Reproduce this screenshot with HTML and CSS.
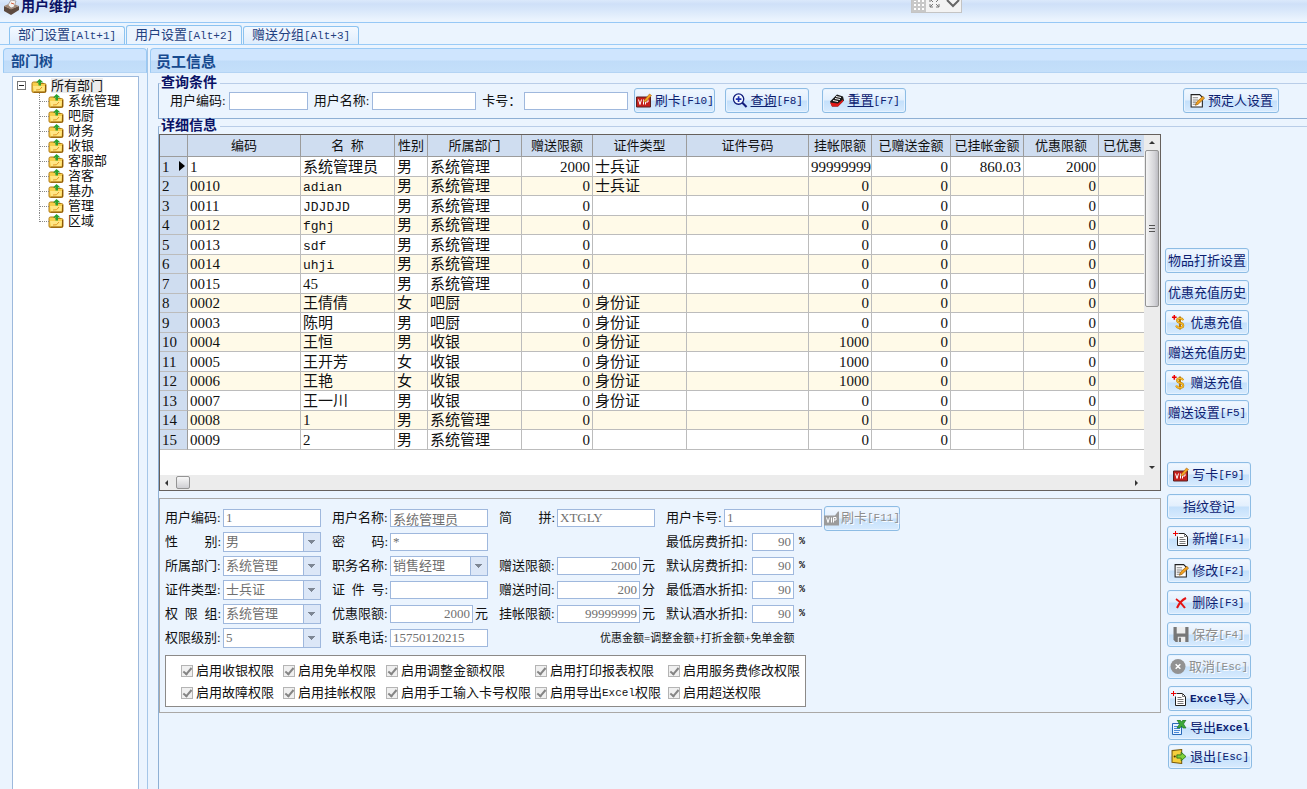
FILE: index.html
```html
<!DOCTYPE html>
<html lang="zh-CN">
<head>
<meta charset="utf-8">
<title>用户维护</title>
<link rel="stylesheet" href="styles.css">
</head>
<body>
<svg class="defs" aria-hidden="true">
  <symbol id="i-folder" viewBox="0 0 16 14"><path d="M1 4.500q0-1.500 1.500-1.500h3.500l1.500 1.500h6q1.500 0 1.500 1.500v6q0 1.500-1.500 1.500h-11q-1.500 0-1.500-1.500z" fill="#f8cf4c" stroke="#b07a14"/><path d="M2 7h12l-1 5.500h-10z" fill="#ffe684"/><path d="M5 11q4 1 6-3" fill="none" stroke="#e39a24"/><path d="M8.500 0l4 3.500h-2.500v3h-2.500v-3h-2.500z" fill="#2ba12d"/><path d="M14.500 6v7h-12" fill="none" stroke="#8b5a0a"/></symbol>
  <symbol id="i-vip" viewBox="0 0 16 14"><path d="M.5 3.500h14v10h-14z" fill="#c5201c" stroke="#5a2020"/><path d="M2.500 6l1.500 5 1.500-5M7.500 6v5M9.500 11v-5h2.500v2.500h-2.500" fill="none" stroke="#fff"/><path d="M8 7l5.500-6.500 2 1.500-5.500 6-2 .5z" fill="#f5a623" stroke="#a8620c" stroke-width=".6"/></symbol>
  <symbol id="i-vip-off" viewBox="0 0 16 14"><path d="M0 4h11l3-4h1v14h-15z" fill="#9b9b9b"/><path d="M2.500 6l1.500 5 1.500-5M7.500 6v5M9.500 11v-5h2.500v2.500h-2.500" fill="none" stroke="#fff"/></symbol>
  <symbol id="i-zoom" viewBox="0 0 16 16"><circle cx="6.500" cy="6.500" r="5.500" fill="#f4f9ff" stroke="#101c7c" stroke-width="1.400"/><path d="M6.500 3.500v6M3.500 6.500h6" stroke="#1c2fb0" stroke-width="1.800"/><path d="M10.500 10.500l4.500 4.500" stroke="#101c7c" stroke-width="2.200"/></symbol>
  <symbol id="i-reset" viewBox="0 0 16 14"><path d="M1 8l7-7 6 2 1 4-6 6h-6z" fill="#1b1b1b"/><path d="M7 3l5 1M6 5l5 1M4 7l5 1" stroke="#fff"/><path d="M1 9l8 1 5-4v2l-5 5h-6z" fill="#e11b1b"/></symbol>
  <symbol id="i-edit" viewBox="0 0 14 14"><path d="M1.500 1.500h8l2.500 2.500v9h-10.500z" fill="#fff" stroke="#222"/><path d="M3 4.500h5M3 6.500h5M3 8.500h3M3 10.500h3" stroke="#888"/><path d="M5.500 11.500l1-3 6-5.500 1.500 2-6 5.500z" fill="#f0a020" stroke="#8a560a" stroke-width=".6"/></symbol>
  <symbol id="i-new" viewBox="0 0 16 15"><path d="M5.500 2.500h6l3 3v9h-10v-9" fill="#fff" stroke="#222"/><path d="M11.500 2.500v3h3M6.500 6.500h4M6.500 8.500h6M6.500 10.500h6M6.500 12.500h6" fill="none" stroke="#777"/><path d="M2.500 0v5M0 2.500h5" stroke="#e00"/></symbol>
  <symbol id="i-money" viewBox="0 0 15 16"><path d="M12 5.500q-1-2-3.500-2-3 0-3 2t3 2.800q3.500.7 3.500 3t-3.500 2.500q-3 0-4-2.500M8.500 1.500v14" fill="none" stroke="#b87808" stroke-width="2.200"/><path d="M12 5.500q-1-2-3.500-2-3 0-3 2t3 2.800q3.500.7 3.500 3t-3.500 2.500q-3 0-4-2.500" fill="none" stroke="#f8bd28" stroke-width="1.300"/><path d="M2.500 0v5M0 2.500h5" stroke="#e00" stroke-width="1.600"/></symbol>
  <symbol id="i-del" viewBox="0 0 12 12"><path d="M1 2q5 3 9 9M11 1q-6 3-9 10" fill="none" stroke="#e41414" stroke-width="2"/></symbol>
  <symbol id="i-save" viewBox="0 0 14 14"><path d="M0 0h14v14h-12l-2-2z" fill="#777"/><path d="M3 0h8v6h-8zM4 9h7v5h-7z" fill="#ededed"/><path d="M5 10h2v4h-2z" fill="#777"/></symbol>
  <symbol id="i-cancel" viewBox="0 0 16 16"><circle cx="8" cy="8" r="8" fill="#929292"/><path d="M5.500 5.500l5 5M10.500 5.500l-5 5" stroke="#fff" stroke-width="1.600"/></symbol>
  <symbol id="i-export" viewBox="0 0 14 15"><path d="M.5 3.500h9v11h-9z" fill="#e8f3ff" stroke="#2869b8"/><path d="M2 6.500h4M2 8.500h6M2 10.500h6M2 12.500h5" stroke="#4a8ad8"/><path d="M5 0h3l1.500 2 1.500-2h3l-2.500 4 2.500 4h-3l-1.500-2-1.500 2h-3l2.500-4z" fill="#3ca83a" stroke="#146a18" stroke-width=".6"/></symbol>
  <symbol id="i-exit" viewBox="0 0 14 14"><path d="M.5 1.500l9-1v13l-9-1z" fill="#f5cf3c" stroke="#7a5c10"/><circle cx="3" cy="7" r="1" fill="#4a3606"/><path d="M5 5.500h4v-2.500l4.500 4-4.500 4v-2.500h-4z" fill="#7fd23a" stroke="#24701a" stroke-width=".8"/></symbol>
</svg>

<header class="titlebar">
  <svg class="app-icon" viewBox="0 0 15 15"><path d="M0 6l7 3 8-3v4l-8 5-7-4z" fill="#5d4a3f"/><path d="M0 6l7-3 8 3-8 3.500z" fill="#a48a78"/><path d="M4 5l3-5 5 1-2 6-3 1z" fill="#f4f1ee" stroke="#8d8078" stroke-width=".6"/><path d="M7 3l3 1" stroke="#d05a3a"/></svg>
  <h1>用户维护</h1>
  <div class="viewer">
    <svg viewBox="0 0 50 13"><path d="M0 0h14v12h-14z" fill="#c8c8c8"/><path d="M2 1h2v1h-2zM6 0h2v2h-2zM10 0h2v2h-2zM2 4h2v2h-2zM6 4h2v2h-2zM10 4h2v2h-2zM2 8h2v2h-2zM6 8h2v2h-2zM10 8h2v2h-2z" fill="#fff"/><path d="M18 2v-2M18 4v3h3M18 7l3-3M27 4v3h-3M27 7l-3-3M19 0l2 2M26 0l-2 2" fill="none" stroke="#777"/><path d="M35 0l6 6 6-6" fill="none" stroke="#666" stroke-width="2"/></svg>
  </div>
</header>

<nav class="tabs">
  <button class="tab">部门设置<span class="key">[Alt+1]</span></button>
  <button class="tab active">用户设置<span class="key">[Alt+2]</span></button>
  <button class="tab">赠送分组<span class="key">[Alt+3]</span></button>
</nav>

<main class="workspace">
  <aside class="panel departments">
    <h2>部门树</h2>
    <div class="tree">
      <div class="root"><span class="toggle"></span><svg><use href="#i-folder"/></svg><span class="picked">所有部门</span></div>
      <ul>
        <li><svg><use href="#i-folder"/></svg>系统管理</li>
        <li><svg><use href="#i-folder"/></svg>吧厨</li>
        <li><svg><use href="#i-folder"/></svg>财务</li>
        <li><svg><use href="#i-folder"/></svg>收银</li>
        <li><svg><use href="#i-folder"/></svg>客服部</li>
        <li><svg><use href="#i-folder"/></svg>咨客</li>
        <li><svg><use href="#i-folder"/></svg>基办</li>
        <li><svg><use href="#i-folder"/></svg>管理</li>
        <li><svg><use href="#i-folder"/></svg>区域</li>
      </ul>
    </div>
  </aside>

  <section class="panel staff">
    <h2>员工信息</h2>
    <fieldset class="query">
      <legend>查询条件</legend>
      <div class="query-row">
        <label for="q-code">用户编码:</label><input id="q-code" class="box q-code" type="text">
        <label for="q-name">用户名称:</label><input id="q-name" class="box q-name" type="text">
        <label for="q-card">卡号：</label><input id="q-card" class="box q-name" type="text">
        <button class="btn swipe"><svg class="ic"><use href="#i-vip"/></svg>刷卡<span class="key">[F10]</span></button>
        <button class="btn find"><svg class="ic"><use href="#i-zoom"/></svg><u>查询</u><span class="key">[F8]</span></button>
        <button class="btn reset"><svg class="ic"><use href="#i-reset"/></svg><u>重置</u><span class="key">[F7]</span></button>
        <button class="btn booker"><svg class="ic"><use href="#i-edit"/></svg>预定人设置</button>
      </div>
    </fieldset>

    <fieldset class="details">
      <legend>详细信息</legend>
      <div class="columns">
        <div class="content">
          <div class="grid">
            <div class="grid-body">
              <table>
                <colgroup><col class="c-row"><col class="c-code"><col class="c-std"><col class="c-sex"><col class="c-std"><col class="c-gift"><col class="c-std"><col class="c-no"><col class="c-credit"><col class="c-given"><col class="c-owed"><col class="c-pref"><col></colgroup>
                <thead><tr><th></th><th>编码</th><th>名&nbsp; 称</th><th>性别</th><th>所属部门</th><th>赠送限额</th><th>证件类型</th><th>证件号码</th><th>挂帐限额</th><th>已赠送金额</th><th>已挂帐金额</th><th>优惠限额</th><th class="cut">已优惠</th></tr></thead>
                <tbody>
                  <tr><th class="current">1</th><td>1</td><td>系统管理员</td><td>男</td><td>系统管理</td><td class="n">2000</td><td>士兵证</td><td></td><td class="n">99999999</td><td class="n">0</td><td class="n">860.03</td><td class="n">2000</td><td></td></tr>
                  <tr><th>2</th><td>0010</td><td><span class="latin">adian</span></td><td>男</td><td>系统管理</td><td class="n">0</td><td>士兵证</td><td></td><td class="n">0</td><td class="n">0</td><td></td><td class="n">0</td><td></td></tr>
                  <tr><th>3</th><td>0011</td><td><span class="latin">JDJDJD</span></td><td>男</td><td>系统管理</td><td class="n">0</td><td></td><td></td><td class="n">0</td><td class="n">0</td><td></td><td class="n">0</td><td></td></tr>
                  <tr><th>4</th><td>0012</td><td><span class="latin">fghj</span></td><td>男</td><td>系统管理</td><td class="n">0</td><td></td><td></td><td class="n">0</td><td class="n">0</td><td></td><td class="n">0</td><td></td></tr>
                  <tr><th>5</th><td>0013</td><td><span class="latin">sdf</span></td><td>男</td><td>系统管理</td><td class="n">0</td><td></td><td></td><td class="n">0</td><td class="n">0</td><td></td><td class="n">0</td><td></td></tr>
                  <tr><th>6</th><td>0014</td><td><span class="latin">uhji</span></td><td>男</td><td>系统管理</td><td class="n">0</td><td></td><td></td><td class="n">0</td><td class="n">0</td><td></td><td class="n">0</td><td></td></tr>
                  <tr><th>7</th><td>0015</td><td>45</td><td>男</td><td>系统管理</td><td class="n">0</td><td></td><td></td><td class="n">0</td><td class="n">0</td><td></td><td class="n">0</td><td></td></tr>
                  <tr><th>8</th><td>0002</td><td>王倩倩</td><td>女</td><td>吧厨</td><td class="n">0</td><td>身份证</td><td></td><td class="n">0</td><td class="n">0</td><td></td><td class="n">0</td><td></td></tr>
                  <tr><th>9</th><td>0003</td><td>陈明</td><td>男</td><td>吧厨</td><td class="n">0</td><td>身份证</td><td></td><td class="n">0</td><td class="n">0</td><td></td><td class="n">0</td><td></td></tr>
                  <tr><th>10</th><td>0004</td><td>王恒</td><td>男</td><td>收银</td><td class="n">0</td><td>身份证</td><td></td><td class="n">1000</td><td class="n">0</td><td></td><td class="n">0</td><td></td></tr>
                  <tr><th>11</th><td>0005</td><td>王开芳</td><td>女</td><td>收银</td><td class="n">0</td><td>身份证</td><td></td><td class="n">1000</td><td class="n">0</td><td></td><td class="n">0</td><td></td></tr>
                  <tr><th>12</th><td>0006</td><td>王艳</td><td>女</td><td>收银</td><td class="n">0</td><td>身份证</td><td></td><td class="n">1000</td><td class="n">0</td><td></td><td class="n">0</td><td></td></tr>
                  <tr><th>13</th><td>0007</td><td>王一川</td><td>男</td><td>收银</td><td class="n">0</td><td>身份证</td><td></td><td class="n">0</td><td class="n">0</td><td></td><td class="n">0</td><td></td></tr>
                  <tr><th>14</th><td>0008</td><td>1</td><td>男</td><td>系统管理</td><td class="n">0</td><td></td><td></td><td class="n">0</td><td class="n">0</td><td></td><td class="n">0</td><td></td></tr>
                  <tr><th>15</th><td>0009</td><td>2</td><td>男</td><td>系统管理</td><td class="n">0</td><td></td><td></td><td class="n">0</td><td class="n">0</td><td></td><td class="n">0</td><td></td></tr>
                </tbody>
              </table>
            </div>
            <div class="vbar"><i class="up"></i><div class="vthumb"><i></i><i></i><i></i></div><i class="down"></i></div>
            <div class="hbar"><i class="left"></i><div class="hthumb"></div><i class="right"></i></div>
          </div>

          <form class="editor">
            <div class="fields">
              <div class="field"><label for="f-code">用户编码:</label><input id="f-code" class="box" type="text" value="1" disabled></div>
              <div class="field"><label for="f-name">用户名称:</label><input id="f-name" class="box cn" type="text" value="系统管理员" disabled></div>
              <div class="field"><label for="f-py"><span>简</span><span>拼:</span></label><input id="f-py" class="box" type="text" value="XTGLY" disabled></div>
              <div class="field"><label for="f-card">用户卡号:</label><input id="f-card" class="box" type="text" value="1" disabled><button class="btn card" type="button" disabled><svg class="ic"><use href="#i-vip-off"/></svg>刷卡<span class="key">[F11]</span></button></div>

              <div class="field"><label for="f-sex"><span>性</span><span>别:</span></label><span class="drop"><select id="f-sex" class="box" disabled><option>男</option></select></span></div>
              <div class="field"><label for="f-pw"><span>密</span><span>码:</span></label><input id="f-pw" class="box" type="text" value="*" disabled></div>
              <div class="field"></div>
              <div class="field wide"><label for="f-d1">最低房费折扣:</label><input id="f-d1" class="box pct" type="text" value="90" disabled><b>%</b></div>

              <div class="field"><label for="f-dept">所属部门:</label><span class="drop"><select id="f-dept" class="box" disabled><option>系统管理</option></select></span></div>
              <div class="field"><label for="f-job">职务名称:</label><span class="drop"><select id="f-job" class="box" disabled><option>销售经理</option></select></span></div>
              <div class="field"><label for="f-gift">赠送限额:</label><input id="f-gift" class="box num" type="text" value="2000" disabled><span>元</span></div>
              <div class="field wide"><label for="f-d2">默认房费折扣:</label><input id="f-d2" class="box pct" type="text" value="90" disabled><b>%</b></div>

              <div class="field"><label for="f-idt">证件类型:</label><span class="drop"><select id="f-idt" class="box" disabled><option>士兵证</option></select></span></div>
              <div class="field"><label for="f-idn"><span>证</span><span>件</span><span>号:</span></label><input id="f-idn" class="box" type="text" disabled></div>
              <div class="field"><label for="f-time">赠送时间:</label><input id="f-time" class="box num" type="text" value="200" disabled><span>分</span></div>
              <div class="field wide"><label for="f-d3">最低酒水折扣:</label><input id="f-d3" class="box pct" type="text" value="90" disabled><b>%</b></div>

              <div class="field"><label for="f-grp"><span>权</span><span>限</span><span>组:</span></label><span class="drop"><select id="f-grp" class="box" disabled><option>系统管理</option></select></span></div>
              <div class="field"><label for="f-pref">优惠限额:</label><input id="f-pref" class="box num" type="text" value="2000" disabled><span>元</span></div>
              <div class="field"><label for="f-credit">挂帐限额:</label><input id="f-credit" class="box num" type="text" value="99999999" disabled><span>元</span></div>
              <div class="field wide"><label for="f-d4">默认酒水折扣:</label><input id="f-d4" class="box pct" type="text" value="90" disabled><b>%</b></div>

              <div class="field"><label for="f-lvl">权限级别:</label><span class="drop"><select id="f-lvl" class="box" disabled><option>5</option></select></span></div>
              <div class="field"><label for="f-tel">联系电话:</label><input id="f-tel" class="box" type="text" value="15750120215" disabled></div>
              <p class="note">优惠金额=调整金额+打折金额+免单金额</p>
            </div>
            <div class="rights">
              <label><input type="checkbox" checked disabled>启用收银权限</label>
              <label><input type="checkbox" checked disabled>启用免单权限</label>
              <label><input type="checkbox" checked disabled>启用调整金额权限</label>
              <label><input type="checkbox" checked disabled>启用打印报表权限</label>
              <label><input type="checkbox" checked disabled>启用服务费修改权限</label>
              <label><input type="checkbox" checked disabled>启用故障权限</label>
              <label><input type="checkbox" checked disabled>启用挂帐权限</label>
              <label><input type="checkbox" checked disabled>启用手工输入卡号权限</label>
              <label><input type="checkbox" checked disabled>启用导出<span class="key">Excel</span>权限</label>
              <label><input type="checkbox" checked disabled>启用超送权限</label>
            </div>
          </form>
        </div>

        <div class="actions">
          <div class="group money">
            <button class="btn">物品打折设置</button>
            <button class="btn">优惠充值历史</button>
            <button class="btn"><svg class="ic"><use href="#i-money"/></svg>优惠充值</button>
            <button class="btn">赠送充值历史</button>
            <button class="btn"><svg class="ic"><use href="#i-money"/></svg>赠送充值</button>
            <button class="btn">赠送设置<span class="key">[F5]</span></button>
          </div>
          <div class="group edit">
            <button class="btn"><svg class="ic"><use href="#i-vip"/></svg>写卡<span class="key">[F9]</span></button>
            <button class="btn">指纹登记</button>
            <button class="btn"><svg class="ic"><use href="#i-new"/></svg>新增<span class="key">[F1]</span></button>
            <button class="btn"><svg class="ic"><use href="#i-edit"/></svg>修改<span class="key">[F2]</span></button>
            <button class="btn"><svg class="ic small"><use href="#i-del"/></svg>删除<span class="key">[F3]</span></button>
            <button class="btn" disabled><svg class="ic"><use href="#i-save"/></svg>保存<span class="key">[F4]</span></button>
            <button class="btn" disabled><svg class="ic"><use href="#i-cancel"/></svg>取消<span class="key">[Esc]</span></button>
          </div>
          <div class="group files">
            <button class="btn"><svg class="ic"><use href="#i-new"/></svg><span class="key strong">Excel</span>导入</button>
            <button class="btn"><svg class="ic"><use href="#i-export"/></svg>导出<span class="key strong">Excel</span></button>
            <button class="btn"><svg class="ic"><use href="#i-exit"/></svg>退出<span class="key">[Esc]</span></button>
          </div>
        </div>
      </div>
    </fieldset>
  </section>
</main>
</body>
</html>
```
FILE: styles.css
```css
* { box-sizing: border-box; }

body {
  margin: 0;
  min-height: 100vh;
  display: flex;
  flex-direction: column;
  background: #ebf4fe;
  color: #111;
  font: 13px/16px "Liberation Serif", "Noto Sans CJK SC", serif;
}

button, input, select { font: inherit; color: inherit; margin: 0; }
h1, h2, p, ul { margin: 0; padding: 0; }
.defs { position: absolute; width: 0; height: 0; }
.key { font: 11px/14px "Liberation Mono", monospace; }
.key.strong { font-weight: bold; }

/* Title bar */
.titlebar {
  position: relative;
  height: 23px;
  display: flex;
  align-items: flex-start;
  gap: 2px;
  padding-left: 4px;
  overflow: hidden;
  background: linear-gradient(#dbe9fb 0, #cfe0f8 4px, #d8e7fa 10px, #ebf4fe 20px);
  border-bottom: 1px solid #96c8f6;
}
.app-icon { width: 15px; height: 15px; }
.titlebar h1 { font-size: 14px; line-height: 14px; color: #0a1266; }
.viewer {
  position: absolute;
  top: 0;
  right: 345px;
  width: 51px;
  height: 13px;
  background: #f3f3f3;
  border: 1px solid #c4c4c4;
  border-top: 0;
}
.viewer svg { display: block; width: 50px; height: 13px; }

/* Tabs */
.tabs {
  display: flex;
  align-items: flex-end;
  gap: 1px;
  height: 22px;
  padding-left: 9px;
  border-bottom: 1px solid #9acbf7;
}
.tab {
  width: 116px;
  height: 18px;
  padding: 0;
  color: #1f4080;
  white-space: nowrap;
  line-height: 14px;
  background: linear-gradient(#f4f9ff, #dfedfc);
  border: 1px solid #8cc3f0;
  border-bottom: 0;
  border-radius: 3px 3px 0 0;
}
.tab.active { height: 19px; background: #ebf4fe; }

/* Panels */
.workspace {
  flex: 1;
  display: flex;
  gap: 2px;
  padding: 3px 0 0 3px;
}
.panel { display: flex; flex-direction: column; }
.panel h2 {
  height: 25px;
  padding-left: 7px;
  line-height: 26px;
  font-size: 14px;
  color: #174a8f;
  background: linear-gradient(#cfe5fe 0, #cfe5fe 11px, #c0dcf9 12px, #c4dffa);
  border: 1px solid #9acaf5;
  border-bottom-color: #b4d4f4;
  border-radius: 4px 4px 0 0;
}
.departments { width: 145px; border-right: 1px solid #a5c6e8; }
.staff { flex: 1; min-width: 0; }
.staff h2 { padding-left: 5px; font-size: 15px; border-right: 0; border-radius: 4px 0 0 0; }

/* Department tree */
.tree {
  flex: 1;
  margin: 3px 8px 0 9px;
  padding: 1px 0 0 4px;
  background: #fff;
  border: 1px solid #9db9dc;
  border-bottom: 0;
  line-height: 15px;
}
.root { display: flex; align-items: center; height: 15px; }
.toggle {
  width: 9px;
  height: 9px;
  border: 1px solid #777;
  background: linear-gradient(#222, #222) center / 5px 1px no-repeat;
}
.root svg { margin: 0 4px 0 5px; }
.tree svg { flex: none; width: 16px; height: 14px; }
.picked { background: #ececec; }
.tree ul { list-style: none; padding-left: 22px; }
.tree li {
  position: relative;
  display: flex;
  align-items: center;
  gap: 4px;
  height: 15px;
  padding-left: 9px;
  white-space: nowrap;
}
.tree li::before {
  content: "";
  position: absolute;
  left: 0;
  top: 0;
  width: 9px;
  height: 8px;
  border-left: 1px dotted #888;
  border-bottom: 1px dotted #888;
}
.tree li:not(:last-child)::after {
  content: "";
  position: absolute;
  left: 0;
  top: 8px;
  height: 7px;
  border-left: 1px dotted #888;
}

/* Field sets */
fieldset {
  min-width: 0;
  margin: 0 0 0 8px;
  padding: 0;
  border: 1px solid #8fb0d4;
  border-top-color: #b9cde8;
  border-right: 0;
}
legend {
  margin-left: 2px;
  padding: 0 3px 0 0;
  font-size: 14px;
  line-height: 14px;
  height: 14px;
  font-weight: bold;
  color: #0a1266;
}
.query { margin-top: 3px; }
.details { flex: 1; border-bottom: 0; }

.box {
  height: 18px;
  padding: 0 2px;
  background: #fff;
  border: 1px solid #9fb8dd;
  border-radius: 0;
  outline: 0;
}
.box:disabled { color: #707070; opacity: 1; }

.query-row {
  display: flex;
  align-items: center;
  margin-top: -2px;
  padding: 0 28px 5px 11px;
}
.query-row label { flex: none; }
.query-row .box { margin: 0 6px 0 3px; }
.q-code { width: 79px; }
.q-name { width: 104px; }

.btn {
  display: flex;
  align-items: center;
  justify-content: center;
  height: 25px;
  padding: 0;
  color: #0c2070;
  white-space: nowrap;
  background: linear-gradient(#f2f8ff 0, #e2effd 11px, #c4e0fb 12px, #d8ebfe);
  border: 1px solid #8dbce4;
  border-radius: 3px;
  box-shadow: inset 0 0 0 1px #e6f2ff;
}
.btn:disabled { color: #8e8e8e; text-shadow: 1px 1px 0 #fff; }
.ic { flex: none; width: 16px; height: 15px; margin-right: 3px; }
.ic.small { height: 12px; }
.swipe { width: 81px; }
.find { width: 84px; margin-left: 10px; }
.reset { width: 84px; margin-left: 13px; }
.booker { width: 96px; margin-left: auto; }

/* Staff grid */
.columns { display: flex; padding-top: 1px; }
.content { flex: 1; min-width: 0; }
.grid {
  display: grid;
  grid-template-columns: minmax(0, 1fr) 16px;
  grid-template-rows: 340px 15px;
  background: #fff;
  border: 1px solid #66605c;
}
.grid-body { overflow: hidden; }
table { width: 100%; table-layout: fixed; border-spacing: 0; font-size: 15px; line-height: 18px; }
.c-row { width: 28px; }
.c-code { width: 113px; }
.c-std { width: 94px; }
.c-sex { width: 33px; }
.c-gift { width: 71px; }
.c-no { width: 122px; }
.c-credit { width: 63px; }
.c-given { width: 79px; }
.c-owed { width: 73px; }
.c-pref { width: 75px; }
th, td {
  height: 19px;
  padding: 0 2px;
  overflow: hidden;
  white-space: nowrap;
  border-right: 1px solid #bcbcbc;
  border-bottom: 1px solid #bcbcbc;
}
th { font-weight: normal; background: #cfddf0; }
thead th { height: 22px; padding: 0; font-size: 13px; border-color: #9c9c9c; }
thead .cut { padding-left: 4px; text-align: left; }
tbody tr:nth-child(odd) td { height: 20px; }
tbody tr:nth-child(even) td { background: #fffae8; }
tbody th { position: relative; text-align: left; border-right-color: #9c9c9c; }
tr > :last-child { border-right: 0; }
.n { text-align: right; }
.latin { font: 13px/12px "Liberation Mono", monospace; }
.current::after {
  content: "";
  position: absolute;
  right: 2px;
  top: 4px;
  border: 5px solid transparent;
  border-left: 6px solid #000;
  border-right: 0;
}

.vbar, .hbar { display: flex; align-items: center; background: #ececec; }
.vbar { flex-direction: column; padding: 6px 0; }
.vthumb {
  flex: none;
  display: flex;
  flex-direction: column;
  align-items: center;
  justify-content: center;
  gap: 2px;
  width: 14px;
  height: 157px;
  margin: 6px 0 auto;
  background: linear-gradient(90deg, #f5f5f5, #d4d4d8 70%, #bcbcc2);
  border: 1px solid #949494;
  border-radius: 2px;
}
.vthumb i { width: 6px; height: 1px; background: #555; }
.hbar { grid-column: 1 / -1; padding: 0 22px 0 5px; }
.hthumb {
  width: 14px;
  height: 13px;
  margin: 0 auto 0 8px;
  background: linear-gradient(#f8f8f8, #cfcfd3);
  border: 1px solid #949494;
  border-radius: 2px;
}
.up, .down, .left, .right { width: 0; height: 0; border: 3px solid transparent; }
.up { border-bottom-color: #333; border-top: 0; }
.down { border-top-color: #333; border-bottom: 0; }
.left { border-right-color: #333; border-left: 0; }
.right { border-left-color: #333; border-right: 0; }

/* Editor */
.editor {
  margin-top: 7px;
  padding: 7px 5px 5px;
  border: 1px solid #aaa8a6;
}
.fields {
  display: grid;
  grid-template-columns: 167px 167px 167px 1fr;
  grid-auto-rows: 24px;
}
.field { display: flex; align-items: center; }
.field label {
  flex: none;
  width: 56px;
  margin-right: 2px;
  display: flex;
  justify-content: space-between;
  white-space: nowrap;
}
.field .box { width: 98px; }
.field .num { width: 83px; margin-right: 2px; text-align: right; }
.field .pct { width: 42px; margin-right: 5px; text-align: right; }
.field b { font: bold 10px/14px "Liberation Mono", monospace; }
.field.wide label { width: 84px; }
.drop { position: relative; display: flex; }
.drop .box { height: 20px; padding: 0 2px; appearance: none; }
.drop::after {
  content: "";
  position: absolute;
  top: 1px;
  right: 1px;
  width: 16px;
  height: 18px;
  border-left: 1px solid #9fb8dd;
  background:
    linear-gradient(#7e8794, #7e8794) 4px 7px / 7px 1px no-repeat,
    linear-gradient(#7e8794, #7e8794) 5px 8px / 5px 1px no-repeat,
    linear-gradient(#7e8794, #7e8794) 6px 9px / 3px 1px no-repeat,
    linear-gradient(#7e8794, #7e8794) 7px 10px / 1px 1px no-repeat,
    #dce7f7;
}
.card { width: 76px; margin-left: 2px; }
.card .ic { margin-right: 1px; }
.note { grid-column: 3 / 5; padding-left: 101px; font-size: 11px; line-height: 24px; }

.rights {
  display: grid;
  grid-template-columns: 102px 103px 149px 133px auto;
  grid-auto-rows: 22px;
  width: 641px;
  margin-top: 5px;
  padding: 4px 0 2px 15px;
  background: #fff;
  border: 1px solid #8c8a88;
}
.rights label { display: flex; align-items: center; white-space: nowrap; }
.rights input {
  appearance: none;
  flex: none;
  width: 12px;
  height: 12px;
  margin-right: 3px;
  display: grid;
  place-items: center;
  background: #f0f0f0;
  border: 1px solid #b4b4b4;
}
.rights input::after {
  content: "";
  width: 3px;
  height: 7px;
  margin-bottom: 2px;
  border: solid #858585;
  border-width: 0 2px 2px 0;
  rotate: 40deg;
}

/* Action buttons */
.actions { flex: none; width: 146px; padding: 114px 0 20px 4px; }
.group { display: flex; flex-direction: column; gap: 5px; }
.group .btn { width: 84px; }
.money .btn:first-child { margin-bottom: 2px; }
.edit { margin-top: 37px; padding-left: 2px; gap: 7px; }
.files { margin-top: 7px; padding-left: 3px; gap: 4px; }
```
